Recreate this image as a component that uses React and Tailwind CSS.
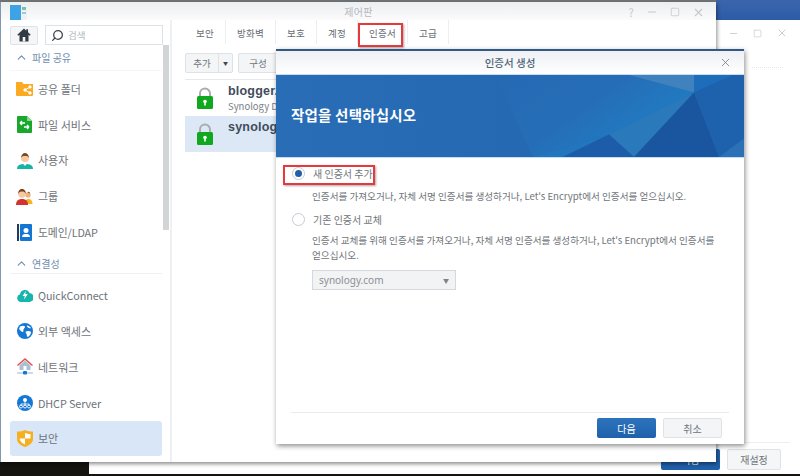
import React from 'react';
import { ChevronUp, Search, X, Minus, Square } from 'lucide-react';

const FONT = "font-['Noto_Sans_CJK_KR','Noto_Sans',sans-serif]";

const HomeIcon = () => (
  <svg width="14" height="14" viewBox="0 0 14 14">
    <path d="M7 .5L.3 6.800l1 1L2.500 6.700V13.500h9V6.700l1.200 1.100 1-1L11 4.300V1.200H9.300v1.500z" fill="#333b43" />
    <rect x="5.700" y="9" width="2.600" height="4.500" fill="#f4f6f8" />
  </svg>
);

const FolderIcon = () => (
  <svg width="17" height="15" viewBox="0 0 17 15">
    <path d="M0 1h6l1.500 2H17v11a1 1 0 0 1-1 1H1a1 1 0 0 1-1-1z" fill="#fbaa22" />
    <g stroke="#fff" strokeWidth="1" fill="#fff">
      <path d="M14 6l-5 3 5 3" fill="none" />
      <circle cx="14" cy="6" r="1.200" />
      <circle cx="9" cy="9" r="1.200" />
      <circle cx="14" cy="12" r="1.200" />
    </g>
  </svg>
);

const FileIcon = () => (
  <svg width="15" height="17" viewBox="0 0 15 17">
    <path d="M1 0h9l5 5v11a1 1 0 0 1-1 1H1a1 1 0 0 1-1-1V1a1 1 0 0 1 1-1z" fill="#18a82c" />
    <path d="M10 0l5 5h-5z" fill="#8bd694" />
    <path d="M3 7h5M3 7l2-2M3 7l2 2M12 11H7M12 11l-2-2M12 11l-2 2" stroke="#fff" strokeWidth="1.400" fill="none" />
  </svg>
);

const UserIcon = () => (
  <svg width="16" height="17" viewBox="0 0 16 17">
    <path d="M0 17c0-4 3-5 8-5s8 1 8 5z" fill="#19b3a6" />
    <path d="M5.500 11h5L8 14z" fill="#fff" />
    <circle cx="8" cy="6" r="4" fill="#f6c9a0" />
    <path d="M4 6c0-3 2-5 4-5s4 2 4 5c-1-2-2-2-4-2s-3 0-4 2z" fill="#7a4a21" />
  </svg>
);

const GroupIcon = () => (
  <svg width="17" height="17" viewBox="0 0 17 17">
    <circle cx="12" cy="7" r="2.600" fill="#e9b27f" />
    <path d="M11 4.500c1-1.500 3-1 3.200 1.500-1-1-2-1.500-3.200-1.500z" fill="#7a4a21" />
    <path d="M9 16c0-4 2-5 3.500-5s4 1 4 5z" fill="#f4b41a" />
    <path d="M0 17c0-4 2-6 6-6s6 2 6 6z" fill="#d6322e" />
    <circle cx="6" cy="6" r="3.800" fill="#f6c9a0" />
    <path d="M2.200 6C2 2.500 4 1 6 1s4 1.500 3.800 5C9 4 8 3.500 6 3.500S3 4 2.200 6z" fill="#7a3d1c" />
  </svg>
);

const BookIcon = () => (
  <svg width="15" height="17" viewBox="0 0 15 17">
    <rect x="0" y="0" width="2" height="17" fill="#1f3b63" />
    <rect x="3" y="0" width="12" height="17" rx="1" fill="#1476d2" />
    <circle cx="9" cy="6.500" r="2.500" fill="#fff" />
    <path d="M5 13c0-2.500 2-3 4-3s4 .5 4 3z" fill="#fff" />
  </svg>
);

const CloudIcon = () => (
  <svg width="16" height="14" viewBox="0 0 16 14">
    <path d="M4 14a4 4 0 0 1-1-7.800A5 5 0 0 1 12.500 5 4.500 4.500 0 0 1 12 14z" fill="#17b5ab" />
    <path d="M8.800 3L5.500 8h2.300L7 11.500 10.800 6H8.300z" fill="#fff" />
  </svg>
);

const GlobeIcon = () => (
  <svg width="16" height="16" viewBox="0 0 16 16">
    <circle cx="8" cy="8" r="8" fill="#1478d4" />
    <path d="M3 3.500c2-1 4-1 5 0 .5 1-1 1.500-1.500 3S7 9 5.500 9 3 6.500 2 6zM10 2.500c1.500 0 3 1 4 2.500-1 .5-2.500 0-3-.5s-1.500-1-1-2zM9 8.500c1.500-1 4-.5 5 .5 0 2-1.500 4-3 5-1.500-.5-1-2-1.500-3S8 9.500 9 8.500z" fill="#fff" />
  </svg>
);

const NetworkIcon = () => (
  <svg width="16" height="17" viewBox="0 0 16 17">
    <path d="M2.500 7.500L8 2.500l5.500 5V12h-11z" fill="#a9bfd3" />
    <path d="M.5 7.500L8 1l7.500 6.500" stroke="#e2504c" strokeWidth="1.500" fill="none" />
    <rect x="6.500" y="8" width="3" height="4" fill="#fff" />
    <path d="M0 15h16" stroke="#9db6cd" strokeWidth="1" />
    <rect x="6" y="13" width="4" height="3.500" rx="1" fill="#1478d4" />
  </svg>
);

const DhcpIcon = () => (
  <svg width="16" height="16" viewBox="0 0 16 16">
    <circle cx="8" cy="8" r="8" fill="#1478d4" />
    <circle cx="8" cy="5" r="2" fill="#fff" />
    <path d="M8 6v3M4 11V9h8v2M8 9v2" stroke="#fff" strokeWidth=".8" fill="none" />
    <circle cx="4" cy="11.500" r="1.500" fill="none" stroke="#fff" strokeWidth=".9" />
    <circle cx="8" cy="11.500" r="1.500" fill="none" stroke="#fff" strokeWidth=".9" />
    <circle cx="12" cy="11.500" r="1.500" fill="none" stroke="#fff" strokeWidth=".9" />
  </svg>
);

const ShieldIcon = () => (
  <svg width="16" height="17" viewBox="0 0 16 17">
    <path d="M0 1.500C3 1.500 5.500 1 8 0c2.500 1 5 1.500 8 1.500V9c0 4-4 6.500-8 8-4-1.500-8-4-8-8z" fill="#f4b01e" />
    <path d="M8 3c1.500.5 3.500 1 5.500 1v4.500H8zM8 8.500v6C5.500 13.500 3 11.500 2.500 8.500z" fill="#fff" />
  </svg>
);

const LockIcon = () => (
  <svg width="16" height="22" viewBox="0 0 16 22" className="shrink-0">
    <path d="M3 10V6.500a5 5 0 0 1 10 0V10" fill="none" stroke="#a9adb0" strokeWidth="2" />
    <rect x="0" y="9" width="16" height="13" rx="1.500" fill="#0fa81f" />
    <circle cx="8" cy="14.500" r="1.800" fill="#fff" />
    <rect x="7.200" y="15" width="1.600" height="3.500" fill="#fff" />
  </svg>
);

const AppIcon = () => (
  <svg width="17" height="15" viewBox="0 0 17 15">
    <rect x="0" y="0" width="11" height="15" fill="#3ea3e4" />
    <rect x="11" y="0" width="6" height="15" fill="#eef2f2" />
    <rect x="12" y="2" width="4" height="3" fill="#7cc0a5" />
    <rect x="12" y="7" width="4" height="2" fill="#9cc8e6" />
  </svg>
);

const sections = [
  {
    title: '파일 공유',
    head: 'h-[26px] border-b border-[#f5f6f7]',
    items: [
      { name: '공유 폴더', icon: FolderIcon },
      { name: '파일 서비스', icon: FileIcon },
      { name: '사용자', icon: UserIcon },
      { name: '그룹', icon: GroupIcon },
      { name: '도메인/LDAP', icon: BookIcon, latin: true },
    ],
  },
  {
    title: '연결성',
    head: 'h-[24px] pt-[3px] mb-[3px] border-b border-[#eef0f2]',
    items: [
      { name: 'QuickConnect', icon: CloudIcon, latin: true },
      { name: '외부 액세스', icon: GlobeIcon },
      { name: '네트워크', icon: NetworkIcon },
      { name: 'DHCP Server', icon: DhcpIcon, latin: true },
      { name: '보안', icon: ShieldIcon, active: true },
    ],
  },
];

const tabs = [
  { name: '보안', width: 'w-[41px]' },
  { name: '방화벽', width: 'w-[50px]' },
  { name: '보호', width: 'w-[41px]' },
  { name: '계정', width: 'w-[41px]' },
  { name: '인증서', width: 'w-[50px]' },
  { name: '고급', width: 'w-[41px]' },
];

function Sidebar() {
  return (
    <aside className="w-[171px] shrink-0 border-r-2 border-[#eef0f2] relative">
      <div className="flex items-center gap-[7px] pl-[9px] pt-[5px]">
        <div className="w-[28px] h-[19px] rounded-[2px] border border-[#dfe4e8] bg-[#f4f6f8] flex items-center justify-center">
          <HomeIcon />
        </div>
        <div className="w-[118px] h-[20px] border border-[#dde2e6] flex items-center pl-[5px] gap-[4px]">
          <Search size={13} strokeWidth={2.4} className="text-[#3d4650] -scale-x-100" />
          <span className="text-[9.500px] text-[#b5bcc3]">검색</span>
        </div>
      </div>
      <div className="absolute left-[162px] top-[25px] w-[6px] h-[185px] bg-[#d2d4d6]" />
      <div className="pl-[9px] w-[161px]">
        {sections.map((section) => (
          <div key={section.title}>
            <div className={`${section.head} flex items-center pl-[5px] gap-[4px] text-[10px] text-[#6d8db0]`}>
              <ChevronUp size={13} strokeWidth={2} />
              <span>{section.title}</span>
            </div>
            {section.items.map((item) => (
              <div
                key={item.name}
                className={`h-[35.850px] flex items-center pl-[6px] gap-[5px] rounded-[3px] text-[#6e7379] ${item.latin ? 'text-[10.800px] tracking-[-0.1px]' : 'text-[11px]'} ${item.active ? 'bg-[#d9e6f7]' : ''}`}
              >
                <span className="w-[17px] flex justify-center">
                  <item.icon />
                </span>
                <span>{item.name}</span>
              </div>
            ))}
          </div>
        ))}
      </div>
    </aside>
  );
}

function CertRow({ name, sub, selected }) {
  return (
    <div className={`h-[36px] flex items-center pl-[12px] gap-[15px] ${selected ? 'bg-[#dce8f5]' : ''}`}>
      <LockIcon />
      <div className="self-start pt-[4px]">
        <div className="font-['Liberation_Sans',sans-serif] text-[12.500px] font-bold leading-[14px] text-[#3f4d5c] tracking-[0.2px] whitespace-nowrap">{name}</div>
        {sub && <div className="text-[9.500px] text-[#7a8087] leading-[13px] mt-[2px] whitespace-nowrap">{sub}</div>}
      </div>
    </div>
  );
}

function MainPanel() {
  return (
    <section className="flex-1 pl-[13px] overflow-hidden">
      <div className="flex h-[24px]">
        {tabs.map((tab) => (
          <div key={tab.name} className={`${tab.width} pt-[2px] border-r border-[#eceef0] flex items-center justify-center text-[9.500px] tracking-[0.2px] text-[#666c73]`}>
            {tab.name}
          </div>
        ))}
      </div>
      <div className="flex pt-[9px] h-[35px] gap-[5px]">
        <div className="flex h-[20px] border border-[#dde2e6] rounded-[2px] bg-[#f3f5f7] text-[9.500px] text-[#6e7379]">
          <span className="w-[33px] flex items-center justify-center border-r border-[#dde2e6]">추가</span>
          <span className="w-[13px] flex items-center justify-center text-[5px] text-[#40464c]">▼</span>
        </div>
        <div className="w-[40px] h-[20px] border border-[#dde2e6] rounded-[2px] bg-[#f3f5f7] flex items-center justify-center text-[9.500px] text-[#6e7379]">구성</div>
      </div>
      <div className="w-[110px] border-t border-[#e6e9ec]">
        <CertRow name="blogger.i" sub="Synology DD" />
        <CertRow name="synology" selected />
      </div>
    </section>
  );
}

function Dialog() {
  return (
    <div className="absolute left-[276px] top-[49px] w-[468px] h-[395px] bg-white border-t-2 border-[#2f5a85] shadow-[1px_2px_5px_rgba(0,0,0,0.45)] flex flex-col">
      <div className="h-[24px] shrink-0 bg-gradient-to-b from-[#eef0f4] to-white flex items-center justify-center relative text-[10.500px] font-medium text-[#4f6479] border-b border-[#c5def2]">
        인증서 생성
        <X size={13} strokeWidth={1.4} className="absolute right-[12px] top-[5px] text-[#6e7378]" />
      </div>
      <div className="h-[80px] shrink-0 relative flex items-center pl-[15px] pb-[2px] border-b border-[#c5def2] box-content">
        <svg className="absolute inset-0" width="468" height="82" viewBox="0 0 468 80" preserveAspectRatio="none">
          <defs>
            <linearGradient id="bannerBase" x1="0" y1="0" x2="1" y2="0">
              <stop offset="0" stopColor="#286db6" />
              <stop offset="0.5" stopColor="#2669b3" />
              <stop offset="1" stopColor="#2066b0" />
            </linearGradient>
            <linearGradient id="bannerMid" x1="0" y1="0" x2="1" y2="0.600">
              <stop offset="0" stopColor="#2669b3" />
              <stop offset="0.500" stopColor="#256eb7" />
              <stop offset="1" stopColor="#1f80c6" />
            </linearGradient>
          </defs>
          <rect width="468" height="80" fill="url(#bannerBase)" />
          <polygon points="220,0 353,0 418,17 333,58 257,80" fill="url(#bannerMid)" />
          <polygon points="353,0 418,17 418,0" fill="#3f82bd" />
          <polygon points="418,0 457,0 418,17" fill="#1e6dbb" />
          <polygon points="418,17 333,58 358,80" fill="#2a7abb" />
          <polygon points="257,80 333,58 287,80" fill="#2176bd" />
          <polygon points="333,58 287,80 358,80" fill="#1d5ca8" />
          <polygon points="418,17 358,80 443,80" fill="#1a55a0" />
          <polygon points="418,17 457,0 468,0 468,62 443,80" fill="#1e62ad" />
          <polygon points="443,80 468,62 468,80" fill="#2a72b5" />
        </svg>
        <span className="relative text-[14.500px] font-bold text-white tracking-[0.2px]">작업을 선택하십시오</span>
      </div>
      <div className="flex-1 relative pl-[16px] pt-[7px] text-[#6f7479]">
        <div className="flex items-center h-[16px] gap-[8px] text-[10px]">
          <span className="w-[13px] h-[13px] rounded-full border border-[#c6ccd2] flex items-center justify-center shrink-0">
            <span className="w-[7px] h-[7px] rounded-full bg-[#2160a8]" />
          </span>
          새 인증서 추가
        </div>
        <p className="pl-[20px] mt-[8px] text-[9.600px] leading-[15px] whitespace-nowrap">인증서를 가져오거나, 자체 서명 인증서를 생성하거나, Let's Encrypt에서 인증서를 얻으십시오.</p>
        <div className="flex items-center h-[16px] gap-[8px] mt-[7px] text-[10px]">
          <span className="w-[13px] h-[13px] rounded-full border border-[#c6ccd2] shrink-0" />
          기존 인증서 교체
        </div>
        <p className="pl-[20px] mt-[6px] w-[440px] text-[9.600px] leading-[15px] break-keep">인증서 교체를 위해 인증서를 가져오거나, 자체 서명 인증서를 생성하거나, Let's Encrypt에서 인증서를 얻으십시오.</p>
        <div className="ml-[20px] mt-[7px] w-[144px] h-[20px] border border-[#d5d9dd] bg-[#f2f3f4] flex items-center justify-between px-[6px] text-[10px] text-[#8b9096]">
          <span className="font-['Noto_Sans',sans-serif]">synology.com</span>
          <span className="text-[6px] text-[#7d8287]">▼</span>
        </div>
        <div className="absolute left-[15px] right-[15px] bottom-[31px] border-t border-[#e8eaec]" />
        <div className="absolute right-[22px] bottom-[6px] flex gap-[7px]">
          <button className="w-[59px] h-[20px] rounded-[2px] bg-gradient-to-b from-[#2c74bd] to-[#2060ab] text-white text-[10px]">다음</button>
          <button className="w-[59px] h-[20px] rounded-[2px] border border-[#e0e3e6] bg-[#f3f5f7] text-[#6e7379] text-[10px]">취소</button>
        </div>
      </div>
    </div>
  );
}

export default function App() {
  return (
    <div className={`relative w-[800px] h-[476px] overflow-hidden bg-[#15140f] ${FONT}`}>
      {/* desktop strip and the window behind */}
      <div className="absolute left-[716px] top-0 w-[84px] h-[20px] bg-gradient-to-b from-[#3a66ad] to-[#2d5ba6]" />
      <div className="absolute left-[89px] top-[20px] w-[711px] h-[454px] bg-white">
        <div className="absolute right-[12px] top-[7px] flex items-center gap-[14px] text-[#c9ced3]">
          <Minus size={11} />
          <Square size={9} />
          <X size={12} />
        </div>
        <div className="absolute right-[17px] top-[47px] w-[31px] border-t border-dotted border-[#e4e6e8]" />
        <div className="absolute left-[172px] right-[10px] bottom-[31px] border-t border-[#eceef0]" />
        <div className="absolute right-[80px] bottom-[4px] w-[59px] h-[21px] rounded-[2px] bg-[#2060ab] flex items-center justify-center text-white text-[10px]">적용</div>
        <div className="absolute right-[19px] bottom-[4px] w-[54px] h-[21px] rounded-[2px] border border-[#e0e3e6] bg-[#f5f6f7] flex items-center justify-center text-[#6e7379] text-[10px]">재설정</div>
      </div>

      <div className="absolute left-0 top-0 w-[716px] h-[2px] bg-[#707477]" />

      {/* control panel window */}
      <div className="absolute left-0 top-[2px] w-[716px] h-[460px] bg-white border-l border-[#7f97b0] shadow-[1px_2px_4px_rgba(0,0,0,0.45)] flex flex-col">
        <div className="h-[18px] shrink-0 bg-gradient-to-b from-[#eceef0] to-[#fbfbfc] relative flex items-center justify-center text-[10px] text-[#b4b9be] tracking-[0.3px]">
          <span className="absolute left-[9px] top-[3px]"><AppIcon /></span>
          제어판
          <div className="absolute right-[11px] top-[3px] flex items-center gap-[12px] text-[#c4c9ce]">
            <span className="text-[11px] leading-[14px]">?</span>
            <Minus size={12} />
            <Square size={10} />
            <X size={13} />
          </div>
        </div>
        <div className="flex-1 flex min-h-0">
          <Sidebar />
          <MainPanel />
        </div>
      </div>

      <Dialog />

      {/* red callouts drawn on the screenshot */}
      <div className="absolute left-[358px] top-[23px] w-[45px] h-[24px] border-2 border-[#e5393b] shadow-[1px_1px_2px_rgba(0,0,0,0.35)]" />
      <div className="absolute left-[283px] top-[165px] w-[92px] h-[20px] border-2 border-[#e5393b] shadow-[1px_1px_2px_rgba(0,0,0,0.35)]" />
    </div>
  );
}
